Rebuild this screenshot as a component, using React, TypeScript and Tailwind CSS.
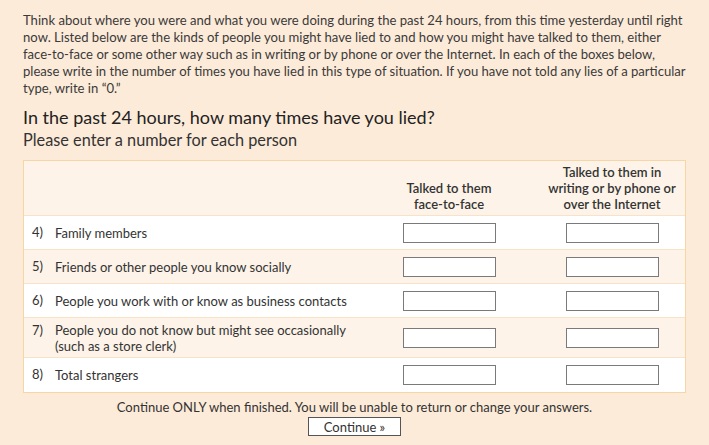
const rows = [
  { n: "4)", label: ["Family members"] },
  { n: "5)", label: ["Friends or other people you know socially"] },
  { n: "6)", label: ["People you work with or know as business contacts"] },
  { n: "7)", label: ["People you do not know but might see occasionally", "(such as a store clerk)"] },
  { n: "8)", label: ["Total strangers"] },
];

const intro = [
  "Think about where you were and what you were doing during the past 24 hours, from this time yesterday until right",
  "now. Listed below are the kinds of people you might have lied to and how you might have talked to them, either",
  "face-to-face or some other way such as in writing or by phone or over the Internet. In each of the boxes below,",
  "please write in the number of times you have lied in this type of situation. If you have not told any lies of a particular",
  "type, write in \u201c0.\u201d",
];

const NumBox = () => (
  <input
    type="text"
    className="w-[93px] h-[20px] bg-white border-[1.5px] border-[#7a7a7a] outline-none"
  />
);

export default function App() {
  return (
    <div className="w-[709px] h-[445px] bg-[#fdebd9] text-[#333] font-['Lato','Open_Sans',sans-serif] overflow-hidden">
      <div className="px-[23px] pt-[12px]">
        <div className="text-[13.1px] leading-[17px] text-[#3a3a3a]">
          {intro.map((l) => (
            <div key={l} className="whitespace-nowrap">
              {l}
            </div>
          ))}
        </div>
        <h2 className="mt-[8px] text-[18px] leading-[24px] text-[#222]">
          In the past 24 hours, how many times have you lied?
        </h2>
        <div className="text-[16.3px] leading-[21px] text-[#333]">Please enter a number for each person</div>

        <div className="mt-[10px] border border-[#f7d6a6] bg-[#fdf3e8]">
          <div className="flex h-[55px] items-end pb-[3px] border-b border-[#f9e2c6] text-[13px] leading-[16px] font-semibold text-[#333]">
            <div className="flex-1" />
            <div className="w-[146px] text-center">
              Talked to them
              <br />
              face-to-face
            </div>
            <div className="w-[17px]" />
            <div className="w-[146px] text-center">
              Talked to them in
              <br />
              writing or by phone or
              <br />
              over the Internet
            </div>
          </div>
          {rows.map((r, i) => (
            <div
              key={r.n}
              className={`flex items-center border-b last:border-b-0 border-[#f9e2c6] ${
                i % 2 === 0 ? "bg-white" : "bg-[#fdf3e9]"
              } ${r.label.length > 1 ? "h-[40px]" : "h-[34px]"}`}
            >
              <div className="w-[31px] pl-[8px] self-center text-[13px] text-[#333]">
                <div className={r.label.length > 1 ? "-mt-[14px]" : ""}>{r.n}</div>
              </div>
              <div className="flex-1 text-[13px] leading-[16px] text-[#333]">
                {r.label.map((l) => (
                  <div key={l}>{l}</div>
                ))}
              </div>
              <div className="w-[146px] flex justify-center">
                <NumBox />
              </div>
              <div className="w-[17px]" />
              <div className="w-[146px] flex justify-center">
                <NumBox />
              </div>
            </div>
          ))}
        </div>

        <div className="mt-[6px] text-center text-[13px] leading-[17px] text-[#333]">
          Continue ONLY when finished. You will be unable to return or change your answers.
        </div>
        <div className="mt-[1px] flex justify-center">
          <button className="w-[93px] h-[19px] bg-white border border-[#555] text-[13px] leading-[16px] text-[#333]">
            Continue »
          </button>
        </div>
      </div>
    </div>
  );
}
